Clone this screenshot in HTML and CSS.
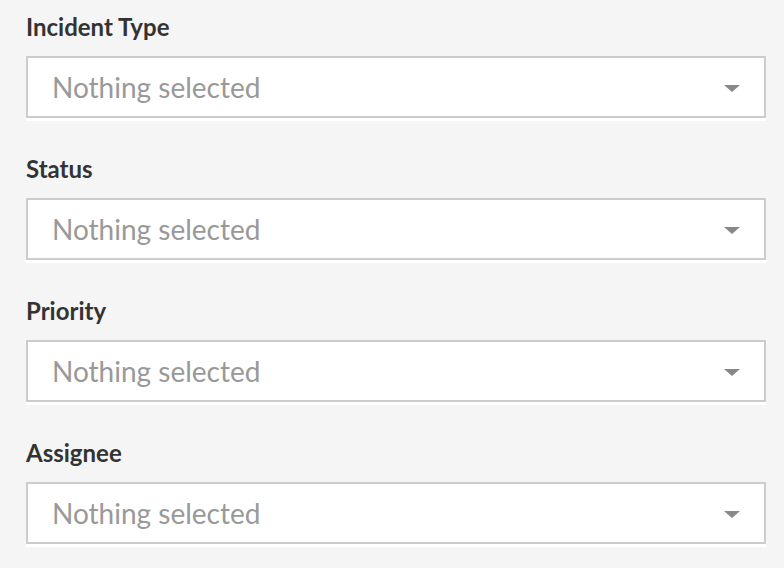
FILE: index.html
```html
<!DOCTYPE html>
<html>
<head>
<meta charset="utf-8">
<link rel="stylesheet" href="styles.css">
</head>
<body>
<div class="form">
  <div class="field">
    <label class="label">Incident Type</label>
    <div class="select"><span class="placeholder">Nothing selected</span><span class="caret"></span></div>
  </div>
  <div class="field">
    <label class="label">Status</label>
    <div class="select"><span class="placeholder">Nothing selected</span><span class="caret"></span></div>
  </div>
  <div class="field">
    <label class="label">Priority</label>
    <div class="select"><span class="placeholder">Nothing selected</span><span class="caret"></span></div>
  </div>
  <div class="field">
    <label class="label">Assignee</label>
    <div class="select"><span class="placeholder">Nothing selected</span><span class="caret"></span></div>
  </div>
</div>
</body>
</html>
```

FILE: styles.css
```css
html, body {
  margin: 0;
  padding: 0;
  background: #f5f5f5;
  font-family: Lato, "Liberation Sans", sans-serif;
}
.form {
  padding: 13px 0 0 26px;
  width: 740px;
}
.field {
  margin-bottom: 37px;
}
.label {
  display: block;
  font-size: 24px;
  font-weight: 700;
  line-height: 28px;
  color: #333;
  margin-bottom: 15px;
}
.select {
  box-sizing: border-box;
  height: 62px;
  border: 2px solid #ccc;
  background: #fff;
  box-shadow: 0 3px 0 #fff;
  display: flex;
  align-items: center;
  justify-content: space-between;
  padding: 0 24px 0 24px;
}
.placeholder {
  font-size: 28px;
  color: #999;
}
.caret {
  width: 0;
  height: 0;
  margin-top: 2px;
  border-left: 8px solid transparent;
  border-right: 8px solid transparent;
  border-top: 7px solid #888;
}
```
